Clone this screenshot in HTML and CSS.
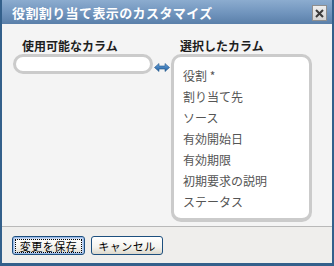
FILE: index.html
```html
<!DOCTYPE html>
<html lang="ja">
<head>
<meta charset="utf-8">
<title>役割割り当て表示のカスタマイズ</title>
<link rel="stylesheet" href="styles.css">
</head>
<body>
<div class="dialog">
  <div class="titlebar">
    <span class="title">役割割り当て表示のカスタマイズ</span>
    <span class="close" aria-label="閉じる">
      <svg width="9" height="9" viewBox="0 0 9 9"><path d="M1 1 L8 8 M8 1 L1 8" stroke="#3a3a3a" stroke-width="2" fill="none"/></svg>
    </span>
  </div>
  <div class="content">
    <div class="col col-left">
      <div class="label">使用可能なカラム</div>
      <div class="box box-left"></div>
    </div>
    <div class="mover">
      <svg width="16" height="9" viewBox="0 0 16 9">
        <defs><linearGradient id="g" x1="0" y1="0" x2="0" y2="1"><stop offset="0" stop-color="#6aa2db"/><stop offset="1" stop-color="#1f5e9e"/></linearGradient></defs>
        <path d="M0.5 4.5 L5 0.5 L5 3 L11 3 L11 0.5 L15.5 4.5 L11 8.5 L11 6 L5 6 L5 8.5 Z" fill="url(#g)" stroke="#24578c" stroke-width="0.6"/>
      </svg>
    </div>
    <div class="col col-right">
      <div class="label">選択したカラム</div>
      <ul class="box box-right">
        <li>役割 *</li>
        <li>割り当て先</li>
        <li>ソース</li>
        <li>有効開始日</li>
        <li>有効期限</li>
        <li>初期要求の説明</li>
        <li>ステータス</li>
      </ul>
    </div>
  </div>
  <div class="footer">
    <button class="btn btn-default"><span class="focus">変更を保存</span></button>
    <button class="btn btn-cancel">キャンセル</button>
  </div>
</div>
</body>
</html>
```

FILE: styles.css
```css
html, body {
  margin: 0;
  padding: 0;
  background: #ffffff;
}
.dialog {
  width: 334px;
  height: 266px;
  box-sizing: border-box;
  border-left: 2px solid #33608b;
  border-right: 2px solid #33608b;
  border-bottom: 3px solid #33608b;
  display: flex;
  flex-direction: column;
  font-family: "Noto Sans CJK JP", "Noto Sans", sans-serif;
  background: #f4f4f4;
}
.titlebar {
  height: 24px;
  flex: none;
  display: flex;
  align-items: center;
  justify-content: space-between;
  padding: 0 5px 0 10px;
  background: linear-gradient(#8caccf, #7094bd 55%, #5a7fa9);
}
.title {
  color: #ffffff;
  font-weight: bold;
  font-size: 13px;
  letter-spacing: 0.4px;
  line-height: 24px;
  padding-top: 1px;
}
.close {
  width: 13px;
  height: 14px;
  border: 1px solid #8e8e8e;
  background: linear-gradient(#eeeeee, #d4d4d4);
  display: flex;
  align-items: center;
  justify-content: center;
  margin-top: 2px;
}
.content {
  flex: 1;
  display: flex;
  align-items: flex-start;
  padding: 14px 0 0 11px;
  border-bottom: 1px solid #b9b9b9;
}
.col {
  display: flex;
  flex-direction: column;
}
.label {
  font-size: 12px;
  font-weight: bold;
  color: #1e1e1e;
  line-height: 16px;
  padding-left: 9px;
}
.box {
  box-sizing: border-box;
  background: #ffffff;
  border: 3px solid #cbcbcb;
  border-radius: 10px;
  margin: 0;
}
.box-left {
  width: 140px;
  height: 20px;
}
.mover {
  width: 18px;
  display: flex;
  justify-content: center;
  padding-top: 25px;
}
.box-right {
  width: 141px;
  height: 168px;
  list-style: none;
  padding: 8px 0 0 9px;
  border-bottom-width: 4px;
}
.box-right li {
  font-size: 12px;
  line-height: 21px;
  color: #555555;
}
.footer {
  height: 36px;
  flex: none;
  background: #efeeec;
  display: flex;
  align-items: flex-start;
  gap: 6px;
  padding: 9px 0 0 10px;
  box-sizing: border-box;
}
.btn {
  height: 19px;
  width: 73px;
  padding: 0;
  border: 1px solid #1d4f7e;
  border-radius: 3px;
  background: linear-gradient(#ffffff, #f4f3ee 60%, #dcd8cc);
  font-family: "Noto Sans CJK JP", "Noto Sans", sans-serif;
  font-size: 11px;
  letter-spacing: 0.5px;
  color: #000000;
  display: flex;
  align-items: center;
  justify-content: center;
}
.btn-cancel {
  width: 72px;
}
.btn-default {
  box-shadow: inset 0 0 0 1px #9cbbe8, inset 0 0 0 2px #c6d8f3;
}
.focus {
  border: 1px dotted #000000;
  padding: 0 4px;
  line-height: 12px;
}
```
